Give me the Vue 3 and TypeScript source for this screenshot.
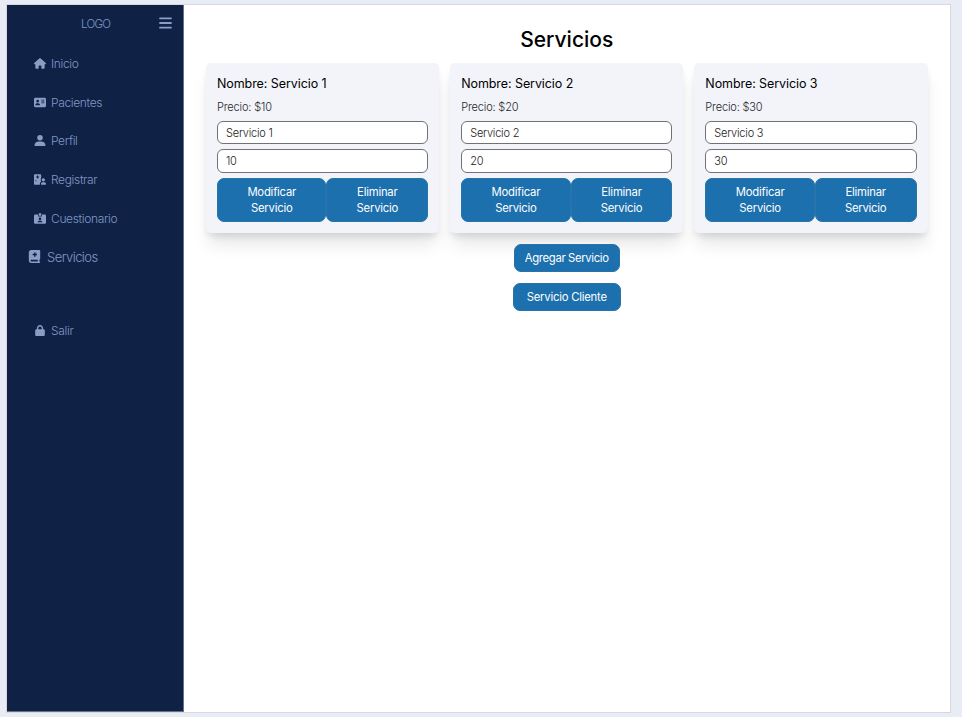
<script setup lang="ts">
import { ref } from 'vue'

interface NavItem {
  label: string
  viewBox: string
  path: string
  kind?: string
}
interface Service {
  name: string
  price: string
}

const navItems: NavItem[] = [
  {
    label: 'Inicio',
    viewBox: '0 0 576 512',
    path: 'M575.8 255.5c0 18-15 32.1-32 32.1h-32l.7 160.2c0 35-26 64.2-56.5 64.2H376c-22 0-24-18-24-24V384c0-17.700-14.300-32-32-32h-64c-17.700 0-32 14.300-32 32v104c0 6-2 24-24 24h-80c-30 0-56-26-56-56V287.600H32c-18 0-32-14-32-32.100 0-9 3-17 10-24L266.400 8c7-7 15-8 22-8s15 2 21 7L564.800 231.500c8 7 12 15 11 24z',
  },
  {
    label: 'Pacientes',
    viewBox: '0 0 576 512',
    path: 'M64 32C28.700 32 0 60.700 0 96v320c0 35.300 28.700 64 64 64h448c35.300 0 64-28.700 64-64V96c0-35.300-28.700-64-64-64H64zM176 128a64 64 0 1 1 0 128 64 64 0 1 1 0-128zM64 368c0-44 36-80 80-80h64c44 0 80 36 80 80 0 9-7 16-16 16H80c-9 0-16-7-16-16zM352 128h144v32H352zM352 192h144v32H352zM352 256h144v32H352z',
  },
  {
    label: 'Perfil',
    viewBox: '0 0 512 512',
    path: 'M256 256a128 128 0 1 0 0-256 128 128 0 1 0 0 256zM190 304C92 304 0 383 0 482c0 17 13 30 30 30h452c17 0 30-13 30-30 0-99-92-178-190-178H190z',
    kind: 'profile',
  },
  {
    label: 'Registrar',
    viewBox: '0 0 576 512',
    path: 'M48 0C22 0 0 22 0 48v416c0 26 22 48 48 48h240c-6-10-8-20-8-32 0-60 24-108 64-134-12-22-20-50-20-82 0-50 8-80 20-106V48c0-26-22-48-48-48H48zM148 64h48v48h48v48h-48v48h-48v-48h-48v-48h48zM64 288h48v48H64zM448 352a80 80 0 1 0 0-160 80 80 0 1 0 0 160zM416 384c-46 0-80 36-80 80v24c0 14 10 24 24 24h192c14 0 24-10 24-24v-24c0-44-34-80-80-80h-80z',
  },
  {
    label: 'Cuestionario',
    viewBox: '0 0 576 512',
    path: 'M256 0h64c18 0 32 14 32 32v64c0 18-14 32-32 32h-64c-18 0-32-14-32-32V32c0-18 14-32 32-32zM64 64h128v48c0 27 21 48 48 48h96c27 0 48-21 48-48V64h128c35 0 64 29 64 64v320c0 35-29 64-64 64H64c-35 0-64-29-64-64V128c0-35 29-64 64-64zM288 208a64 64 0 1 0 0 128 64 64 0 1 0 0-128zM256 368c-44 0-80 28-80 64h224c0-36-36-64-80-64h-64z',
  },
  {
    label: 'Servicios',
    viewBox: '0 0 448 512',
    path: 'M96 0C43 0 0 43 0 96v320c0 53 43 96 96 96h320c18 0 32-14 32-32s-14-32-32-32v-64c18 0 32-14 32-32V32c0-18-14-32-32-32H96zM96 384h256v64H96c-18 0-32-14-32-32s14-32 32-32zM208 96h56v56h56v56h-56v56h-56v-56h-56v-56h56z',
    kind: 'current',
  },
  {
    label: 'Salir',
    viewBox: '0 0 448 512',
    path: 'M144 144v48h160v-48c0-44-36-80-80-80s-80 36-80 80zM80 192v-48C80 64 144 0 224 0s144 64 144 144v48h16c35 0 64 29 64 64v192c0 35-29 64-64 64H64c-35 0-64-29-64-64V256c0-35 29-64 64-64h16z',
    kind: 'exit',
  },
]

const services = ref<Service[]>([
  { name: 'Servicio 1', price: '10' },
  { name: 'Servicio 2', price: '20' },
  { name: 'Servicio 3', price: '30' },
])
</script>

<template>
  <div class="page">
    <div class="panel">
      <aside class="sidebar">
        <header class="brand">
          <span class="logo">LOGO</span>
          <svg class="bars" viewBox="0 0 13 12"><path d="M1 1.300h11M1 6h11M1 10.700h11" /></svg>
        </header>
        <nav>
          <a v-for="item in navItems" :key="item.label" class="nav-item" :class="item.kind">
            <svg class="nav-icon" :viewBox="item.viewBox"><path :d="item.path" /></svg>
            <span>{{ item.label }}</span>
          </a>
        </nav>
      </aside>
      <main class="content">
        <h1>Servicios</h1>
        <section class="cards">
          <article v-for="service in services" :key="service.name" class="card">
            <h2>Nombre: {{ service.name }}</h2>
            <p>Precio: ${{ service.price }}</p>
            <input type="text" :value="service.name" />
            <input type="text" :value="service.price" />
            <div class="actions">
              <button class="edit">Modificar<br />Servicio</button>
              <button class="remove">Eliminar<br />Servicio</button>
            </div>
          </article>
        </section>
        <div class="footer-actions">
          <button class="add">Agregar Servicio</button>
          <button class="client">Servicio Cliente</button>
        </div>
      </main>
    </div>
  </div>
</template>

<style>
body {
  background: #e8edf5;
}
</style>

<style scoped>
* {
  box-sizing: border-box;
}
.page {
  height: 717px;
  padding: 4px 11px 4px 6px;
  background: #e8edf5;
  font-family: Inter, 'Liberation Sans', sans-serif;
  overflow: hidden;
}
.panel {
  display: flex;
  height: 709px;
  border: 1px solid #d6d8dc;
  background: #fff;
}
.sidebar {
  width: 177px;
  flex: none;
  background: #0f2144;
  border-right: 1px solid #66728a;
  border-bottom: 1px solid #66728a;
  color: #8297c6;
}
.brand {
  display: flex;
  align-items: center;
  justify-content: space-between;
  height: 39px;
  padding: 0 11px 0 74px;
  font-size: 11.500px;
  font-weight: 300;
  letter-spacing: -0.750px;
}
.logo {
  margin-top: -1px;
}
.bars {
  width: 13px;
  height: 12px;
  margin-top: -3px;
  fill: none;
  stroke: #8b9dc5;
  stroke-width: 1.800;
  stroke-linecap: round;
}
.nav-item {
  display: flex;
  align-items: center;
  gap: 5px;
  height: 38.700px;
  padding: 0 0 0 27px;
  font-size: 12px;
  font-weight: 300;
  letter-spacing: -0.350px;
}
.nav-icon {
  width: 12px;
  height: 11px;
  fill: #8b9dc5;
  fill-rule: evenodd;
}
.current {
  padding-left: 21px;
  gap: 6px;
  font-size: 13px;
  letter-spacing: -0.550px;
}
.current .nav-icon {
  width: 13px;
  height: 13px;
  margin-top: -1px;
}
.exit {
  margin-top: 35px;
}
.content {
  flex: 1;
  padding: 0 22.500px 0 22px;
}
h1 {
  margin: 0;
  padding-top: 20px;
  height: 58px;
  font-size: 21px;
  line-height: 30px;
  font-weight: 500;
  text-align: center;
  color: #000;
}
.cards {
  display: grid;
  grid-template-columns: repeat(3, 1fr);
  gap: 11px;
}
.card {
  height: 170px;
  padding: 11px;
  border-radius: 5px;
  background: #f3f4f9;
  box-shadow: 0 14px 17px -3px rgba(0, 0, 0, 0.1), 0 5px 7px -2px rgba(0, 0, 0, 0.1);
}
h2 {
  margin: 0;
  font-size: 12.500px;
  line-height: 19px;
  font-weight: 400;
  letter-spacing: -0.080px;
  color: #000;
}
p {
  margin: 6px 0 5px;
  font-size: 11px;
  line-height: 17px;
  font-weight: 300;
  letter-spacing: -0.160px;
  color: #27272a;
}
input {
  display: block;
  width: 100%;
  height: 23px;
  margin: 0 0 5px;
  padding: 0 8px;
  border: 1px solid #707278;
  border-radius: 6px;
  background: #fff;
  font-family: inherit;
  font-size: 11px;
  font-weight: 300;
  letter-spacing: -0.220px;
  color: #222;
  outline: 0;
}
input + input {
  height: 24px;
}
.actions {
  display: flex;
}
button {
  padding: 0;
  border: 1px solid #2873ac;
  border-radius: 7px;
  background: #1c70ad;
  color: #fff;
  font-family: inherit;
  font-size: 11.300px;
  line-height: 16px;
  font-weight: 400;
  letter-spacing: -0.220px;
}
.actions button {
  height: 44px;
}
.edit {
  flex: 110;
}
.remove {
  flex: 102;
}
.footer-actions {
  display: flex;
  flex-direction: column;
  align-items: center;
  gap: 11px;
  padding-top: 11px;
}
.footer-actions button {
  height: 28px;
}
.add {
  width: 106px;
}
.footer-actions .add {
  letter-spacing: -0.350px;
}
.client {
  width: 108px;
}
</style>
